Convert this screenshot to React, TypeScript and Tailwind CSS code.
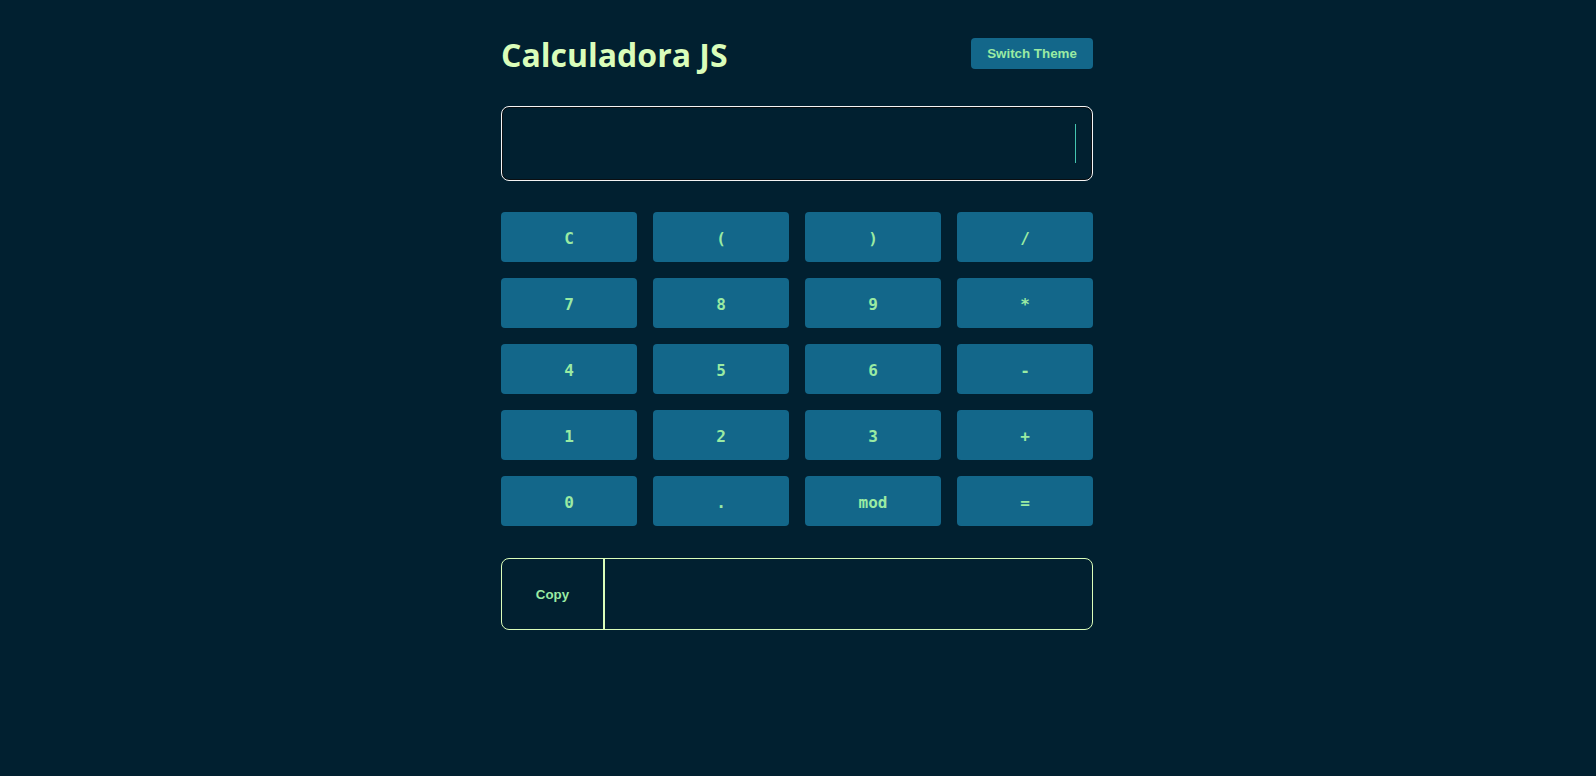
import React from "react";

const keys = ["C", "(", ")", "/", "7", "8", "9", "*", "4", "5", "6", "-", "1", "2", "3", "+", "0", ".", "mod", "="];

export default function App() {
  return (
    <div className="min-h-[776px] w-full bg-[#012030]">
      <div className="ml-[calc(50%-297px)] w-[592px] pt-[33px]">
        <div className="flex h-[44px] items-start justify-between">
          <h1
            className="text-[32px] font-bold leading-[44px] text-[#DAFDBA]"
            style={{ fontFamily: "'Open Sans', 'Noto Sans', sans-serif" }}
          >
            Calculadora JS
          </h1>
          <button
            className="mt-[5px] h-[31px] w-[122px] rounded-[4px] bg-[#13678A] text-[13.333px] font-bold text-[#9AEBA3]"
            style={{ fontFamily: "'Liberation Sans', Arial, sans-serif" }}
          >
            Switch Theme
          </button>
        </div>

        <div className="mt-[29px] flex h-[75px] items-center justify-end rounded-[8px] border border-[#f4f4f4] pr-[16px] shadow-[inset_0_0_0_1px_#0b0f12]">
          <div className="h-[39px] w-px bg-[#45C4B0]" />
        </div>

        <div className="mt-[31px] grid grid-cols-4 gap-4">
          {keys.map((k) => (
            <button
              key={k}
              className="h-[50px] rounded-[4px] bg-[#13678A] pt-[3px] text-[16px] font-bold text-[#9AEBA3]"
              style={{ fontFamily: "'DejaVu Sans Mono', 'Liberation Mono', monospace" }}
            >
              {k}
            </button>
          ))}
        </div>

        <div className="mt-[32px] flex h-[72px] overflow-hidden rounded-[8px] border border-[#DAFDBA]">
          <button
            className="w-[103px] border-r-2 border-[#DAFDBA] pt-[2px] text-[13.333px] font-bold text-[#9AEBA3]"
            style={{ fontFamily: "'Liberation Sans', Arial, sans-serif" }}
          >
            Copy
          </button>
          <div className="flex-1" />
        </div>
      </div>
    </div>
  );
}
